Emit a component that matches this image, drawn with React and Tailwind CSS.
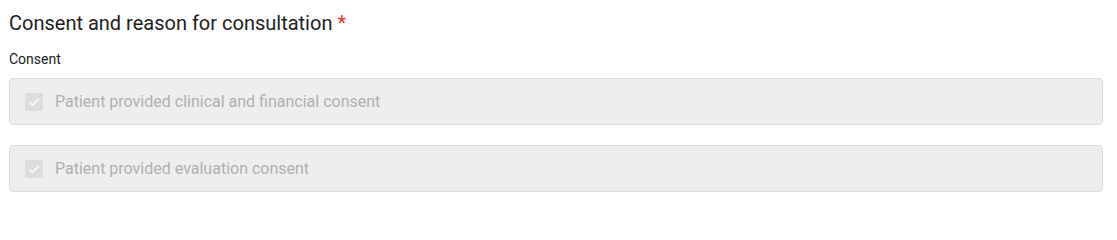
export default function App() {
  const options = [
    'Patient provided clinical and financial consent',
    'Patient provided evaluation consent',
  ];

  return (
    <div className="w-[1117px] h-[211px] bg-white font-['Roboto',sans-serif] pl-[9px] pr-[14px] pt-[9px]">
      <h2 className="text-[20px] leading-[28px] text-[#212121]">
        Consent and reason for consultation <span className="text-[#e53935]">*</span>
      </h2>
      <div className="mt-[12px] text-[14px] leading-[20px] text-[#212121]">Consent</div>
      <div className="mt-[9px] flex flex-col gap-[20px]">
        {options.map((label) => (
          <div
            key={label}
            className="h-[47px] flex items-center gap-[12px] pl-[15px] bg-[#eeeeee] border border-[#dcdcdc] rounded-[4px]"
          >
            <span className="w-[18px] h-[18px] rounded-[1px] bg-[#dddddd] flex items-center justify-center">
              <svg width="14" height="14" viewBox="0 0 24 24" fill="none">
                <path d="M4.5 12.5l5 5L20 7" stroke="#ffffff" strokeWidth="2.6" />
              </svg>
            </span>
            <span className="text-[16px] leading-[24px] text-[#b0b0b0]">{label}</span>
          </div>
        ))}
      </div>
    </div>
  );
}
